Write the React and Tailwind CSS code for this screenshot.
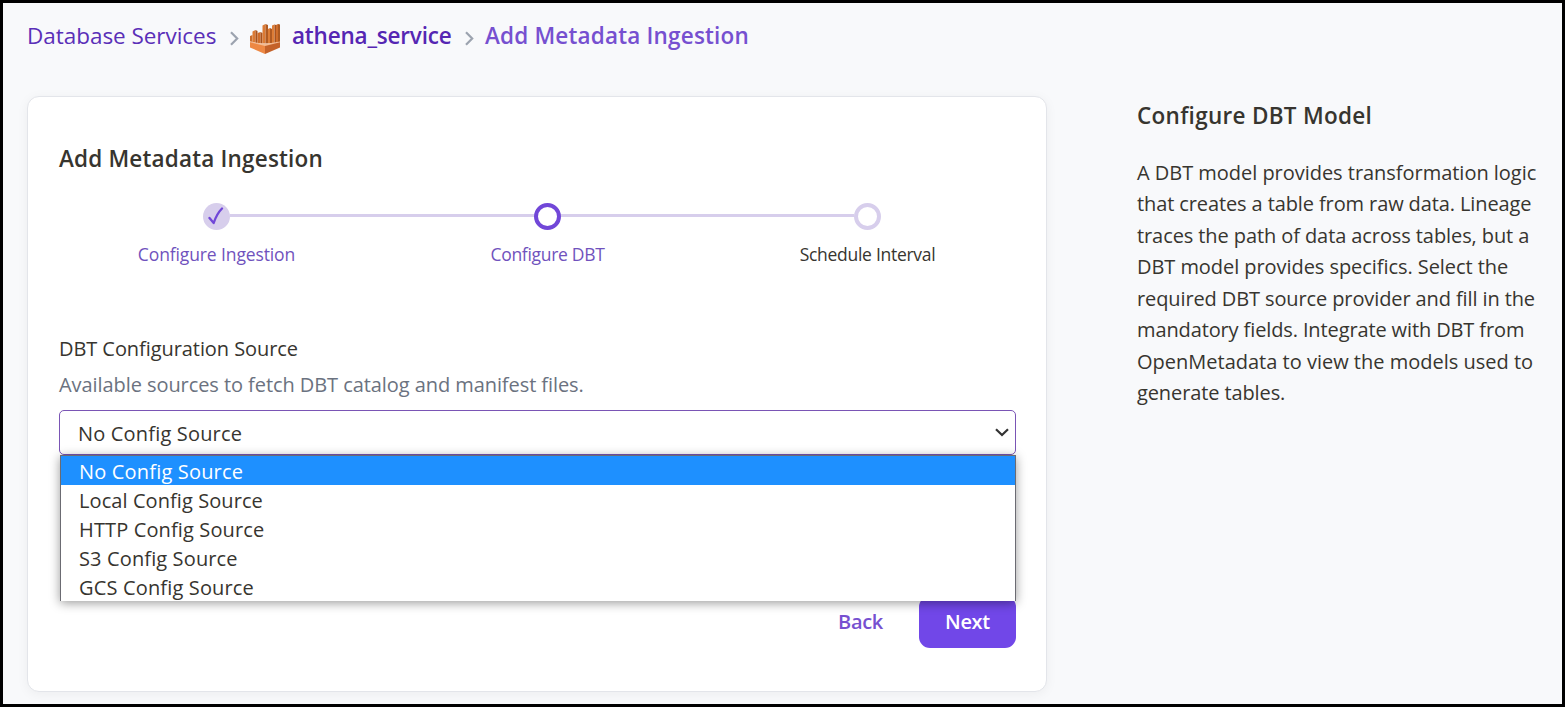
import React from "react";

const options = [
  { name: "No Config Source", cls: "tracking-[0.18px]" },
  { name: "Local Config Source", cls: "tracking-[0.08px]" },
  { name: "HTTP Config Source", cls: "tracking-[0.13px]" },
  { name: "S3 Config Source", cls: "tracking-[0.13px]" },
  { name: "GCS Config Source", cls: "tracking-[0.16px]" },
];

const paragraph = [
  { text: "A DBT model provides transformation logic", cls: "tracking-[-0.03px]" },
  { text: "that creates a table from raw data. Lineage", cls: "tracking-[-0.11px]" },
  { text: "traces the path of data across tables, but a", cls: "tracking-[-0.09px]" },
  { text: "DBT model provides specifics. Select the", cls: "tracking-[-0.06px]" },
  { text: "required DBT source provider and fill in the", cls: "tracking-[-0.11px]" },
  { text: "mandatory fields. Integrate with DBT from", cls: "tracking-[-0.12px]" },
  { text: "OpenMetadata to view the models used to", cls: "tracking-[0px]" },
  { text: "generate tables.", cls: "tracking-[-0.11px]" },
];

function Chevron({ className }) {
  return (
    <svg className={className} width="9" height="15" viewBox="0 0 9 15" fill="none" stroke="#9ca3af" strokeWidth="2.2">
      <path d="M1 1.2 L7.2 7.5 L1 13.8" />
    </svg>
  );
}

function AthenaIcon() {
  return (
    <svg className="mt-[5px] ml-[11px] shrink-0" width="30" height="30" viewBox="0 0 30 30">
      <path d="M0 12l2.500-1v7l-2.500-.500z" fill="#c96c2c" />
      <path d="M2.500 7.500l3-1.500v12.500h-3z" fill="#db7a34" />
      <path d="M5.500 6l2 1v12h-2z" fill="#a9521d" />
      <path d="M7.500 9l3-1v11h-3z" fill="#cf6d2b" />
      <path d="M10.500 8l2 1v10.500h-2z" fill="#a9521d" />
      <path d="M12.500 1.500l3-1.500v19.500h-3z" fill="#db7a34" />
      <path d="M15.500 0l2.500 1v18.500h-2.500z" fill="#b05a22" />
      <path d="M18 5l2-1v15.500h-2z" fill="#dd7d37" />
      <path d="M20 4l2 1v14h-2z" fill="#b05a22" />
      <path d="M22 1.500l2.500-1v18.500h-2.500z" fill="#dd7d37" />
      <path d="M24.500 .5l1.500.500v18h-1.500z" fill="#a9521d" />
      <path d="M26 1l2-1v18.500h-2z" fill="#cf6d2b" />
      <path d="M28 0l2 .5v17.500h-2z" fill="#ad5920" />
      <path d="M0 17.500l15 2.500 15-2.500v1.500l-15 4-15-4z" fill="#f3bb93" />
      <path d="M0 18.200l15 3.800v8l-15-6.500z" fill="#ed8844" />
      <path d="M30 18.200l-15 3.800v8l15-6.500z" fill="#c4622a" />
    </svg>
  );
}

function Step({ label, state, className, textClass }) {
  return (
    <div className={"flex flex-col items-center " + className}>
      <div
        className={
          "flex size-[27px] items-center justify-center rounded-full " +
          (state === "done"
            ? "bg-[#d7ceec]"
            : state === "active"
              ? "border-4 border-[#7147d8] bg-white"
              : "border-4 border-[#d7ceec] bg-white")
        }
      >
        {state === "done" && (
          <svg className="-mt-px -ml-px" width="16" height="18" viewBox="0 0 16 18" fill="none" stroke="#7147d8" strokeWidth="2.3" strokeLinecap="round" strokeLinejoin="round">
            <path d="M1.500 11 L5.700 16 C7.500 10.500 10 5.500 14 1.500" />
          </svg>
        )}
      </div>
      <div className={"mt-[11px] text-[17.5px] leading-[27px] whitespace-nowrap " + textClass}>{label}</div>
    </div>
  );
}

export default function App() {
  return (
    <div className="flex h-[707px] w-[1565px] flex-col overflow-hidden border-3 border-black bg-[#f8f9fb] font-['Open_Sans','Noto_Sans',sans-serif] text-[#37352f]">
      <nav className="flex h-[93px] items-start pt-[16px] pl-[24px] text-[22.500px] leading-[34px] whitespace-nowrap">
        <a className="w-[189px] tracking-[-0.04px] text-[#5a2fb8]">Database Services</a>
        <Chevron className="mt-[12px] ml-[14px] shrink-0" />
        <AthenaIcon />
        <a className="ml-[12px] w-[160px] font-semibold tracking-[-0.19px] text-[#5526b3]">athena_service</a>
        <Chevron className="mt-[12px] ml-[13px] shrink-0" />
        <span className="ml-[11px] font-semibold tracking-[0.18px] text-[#7650d0]">Add Metadata Ingestion</span>
      </nav>

      <div className="flex items-start pl-[24px]">
        <main className="flex h-[596px] w-[1020px] shrink-0 flex-col rounded-xl border border-[#e3e5ea] bg-white pt-[45px] pr-[30px] pl-[31px] shadow-[0_2px_12px_rgba(0,0,0,0.05)]">
          <h1 className="text-[22.500px] leading-[34px] font-semibold tracking-[0.18px] whitespace-nowrap">Add Metadata Ingestion</h1>

          <div className="mt-[27px] flex h-[67px] items-start">
            <Step label="Configure Ingestion" state="done" className="ml-[144px] w-[27px]" textClass="tracking-[-0.12px] text-[#7052bd]" />
            <div className="mt-[11px] h-[3px] w-[304px] bg-[#d7ceec]" />
            <Step label="Configure DBT" state="active" className="w-[27px]" textClass="tracking-[-0.3px] text-[#7052bd]" />
            <div className="mt-[11px] h-[3px] w-[293px] bg-[#d7ceec]" />
            <Step label="Schedule Interval" state="todo" className="w-[27px]" textClass="tracking-[-0.28px]" />
          </div>

          <div className="mt-[63px] text-[20px] leading-[32px] tracking-[-0.07px]">DBT Configuration Source</div>
          <div className="mt-[4px] text-[20px] leading-[32px] tracking-[-0.07px] text-[#6b7280]">Available sources to fetch DBT catalog and manifest files.</div>

          <div className="relative mt-[9px] h-[45px] shrink-0">
            <div className="flex h-[45px] items-center justify-between rounded-[5px] border border-[#7a55b5] pr-[6px] pl-[18px] text-[20px]">
              <span className="pt-[2px] tracking-[0.18px]">No Config Source</span>
              <svg width="14" height="9" viewBox="0 0 14 9" fill="none" stroke="#333" strokeWidth="2.2">
                <path d="M1 1.200 L7 7 L13 1.200" />
              </svg>
            </div>
            <div className="absolute top-[45px] left-[1px] z-10 h-[146px] w-[956px] border border-b-0 border-[#6b6b72] bg-white shadow-[0_2px_10px_rgba(0,0,0,0.4)]">
              {options.map((o, i) => (
                <div
                  key={o.name}
                  className={
                    "h-[29px] pl-[18px] text-[20px] leading-[31px] " + o.cls + (i === 0 ? " bg-[#1e90ff] text-white" : "")
                  }
                >
                  {o.name}
                </div>
              ))}
            </div>
          </div>

          <div className="mt-[141px] flex items-center justify-end text-[20px]">
            <button className="mr-[37px] w-[44px] font-semibold tracking-[-0.3px] text-[#7650d0]">Back</button>
            <button className="h-[52px] w-[97px] rounded-[11px] bg-[#7147e8] font-semibold tracking-[-0.3px] text-white">Next</button>
          </div>
        </main>

        <aside className="ml-[90px] pt-[3px] whitespace-nowrap">
          <h2 className="text-[22.500px] leading-[34px] font-semibold tracking-[0.29px]">Configure DBT Model</h2>
          <p className="mt-[23.500px] text-[20px] leading-[31.500px]">
            {paragraph.map((line) => (
              <span key={line.text} className={"block " + line.cls}>{line.text}</span>
            ))}
          </p>
        </aside>
      </div>
    </div>
  );
}
